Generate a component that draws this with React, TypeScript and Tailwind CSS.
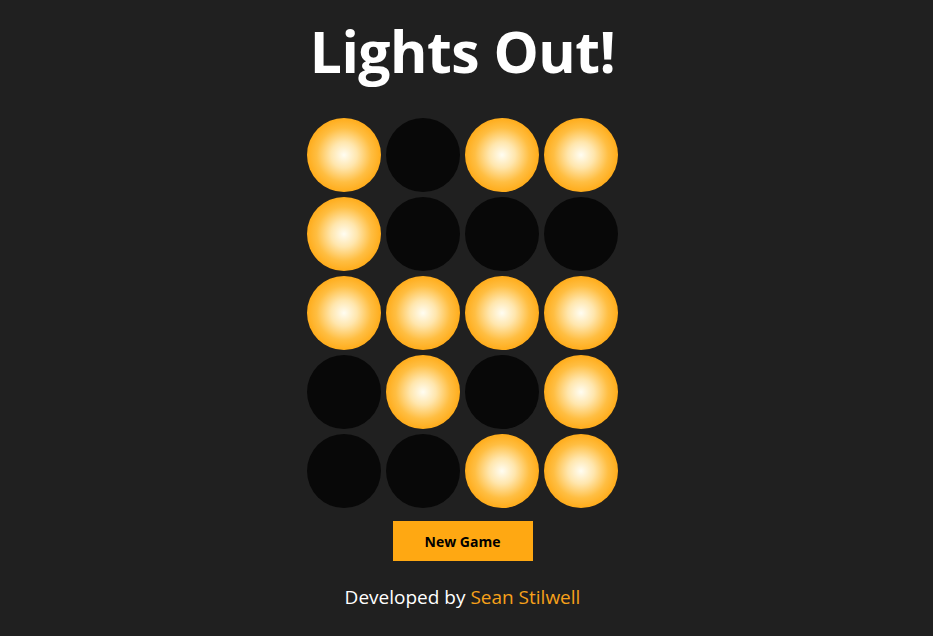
import React, { useState } from "react";

const initial = [
  [1, 0, 1, 1],
  [1, 0, 0, 0],
  [1, 1, 1, 1],
  [0, 1, 0, 1],
  [0, 0, 1, 1],
];

export default function App() {
  const [board, setBoard] = useState<number[][]>(initial);

  const toggle = (r: number, c: number) => {
    setBoard((prev) =>
      prev.map((row, ri) =>
        row.map((v, ci) =>
          (ri === r && Math.abs(ci - c) <= 1) || (ci === c && Math.abs(ri - r) === 1) ? 1 - v : v
        )
      )
    );
  };

  return (
    <div className="min-h-screen w-full bg-[#202020] flex flex-col items-center pr-[8px] font-['Open_Sans',sans-serif] text-white">
      <h1 className="mt-[13px] text-[57px] leading-[76px] font-bold tracking-[-0.5px]">Lights Out!</h1>

      <div className="mt-[29px] grid grid-cols-4 gap-[5px]">
        {board.map((row, r) =>
          row.map((on, c) => (
            <button
              key={`${r}-${c}`}
              onClick={() => toggle(r, c)}
              className={
                on
                  ? "w-[74px] h-[74px] rounded-full bg-[radial-gradient(circle,#fffdf2_0%,#ffe6ad_25%,#ffbe42_52%,#ffa812_75%)]"
                  : "w-[74px] h-[74px] rounded-full bg-[#080808]"
              }
            />
          ))
        )}
      </div>

      <button
        onClick={() => setBoard(initial)}
        className="mt-[13px] w-[140px] h-[40px] bg-[#ffa812] text-black text-[14px] font-bold"
      >
        New Game
      </button>

      <p className="mt-[22px] text-[19px]">
        Developed by <span className="text-[#f7a11a]">Sean Stilwell</span>
      </p>
    </div>
  );
}
